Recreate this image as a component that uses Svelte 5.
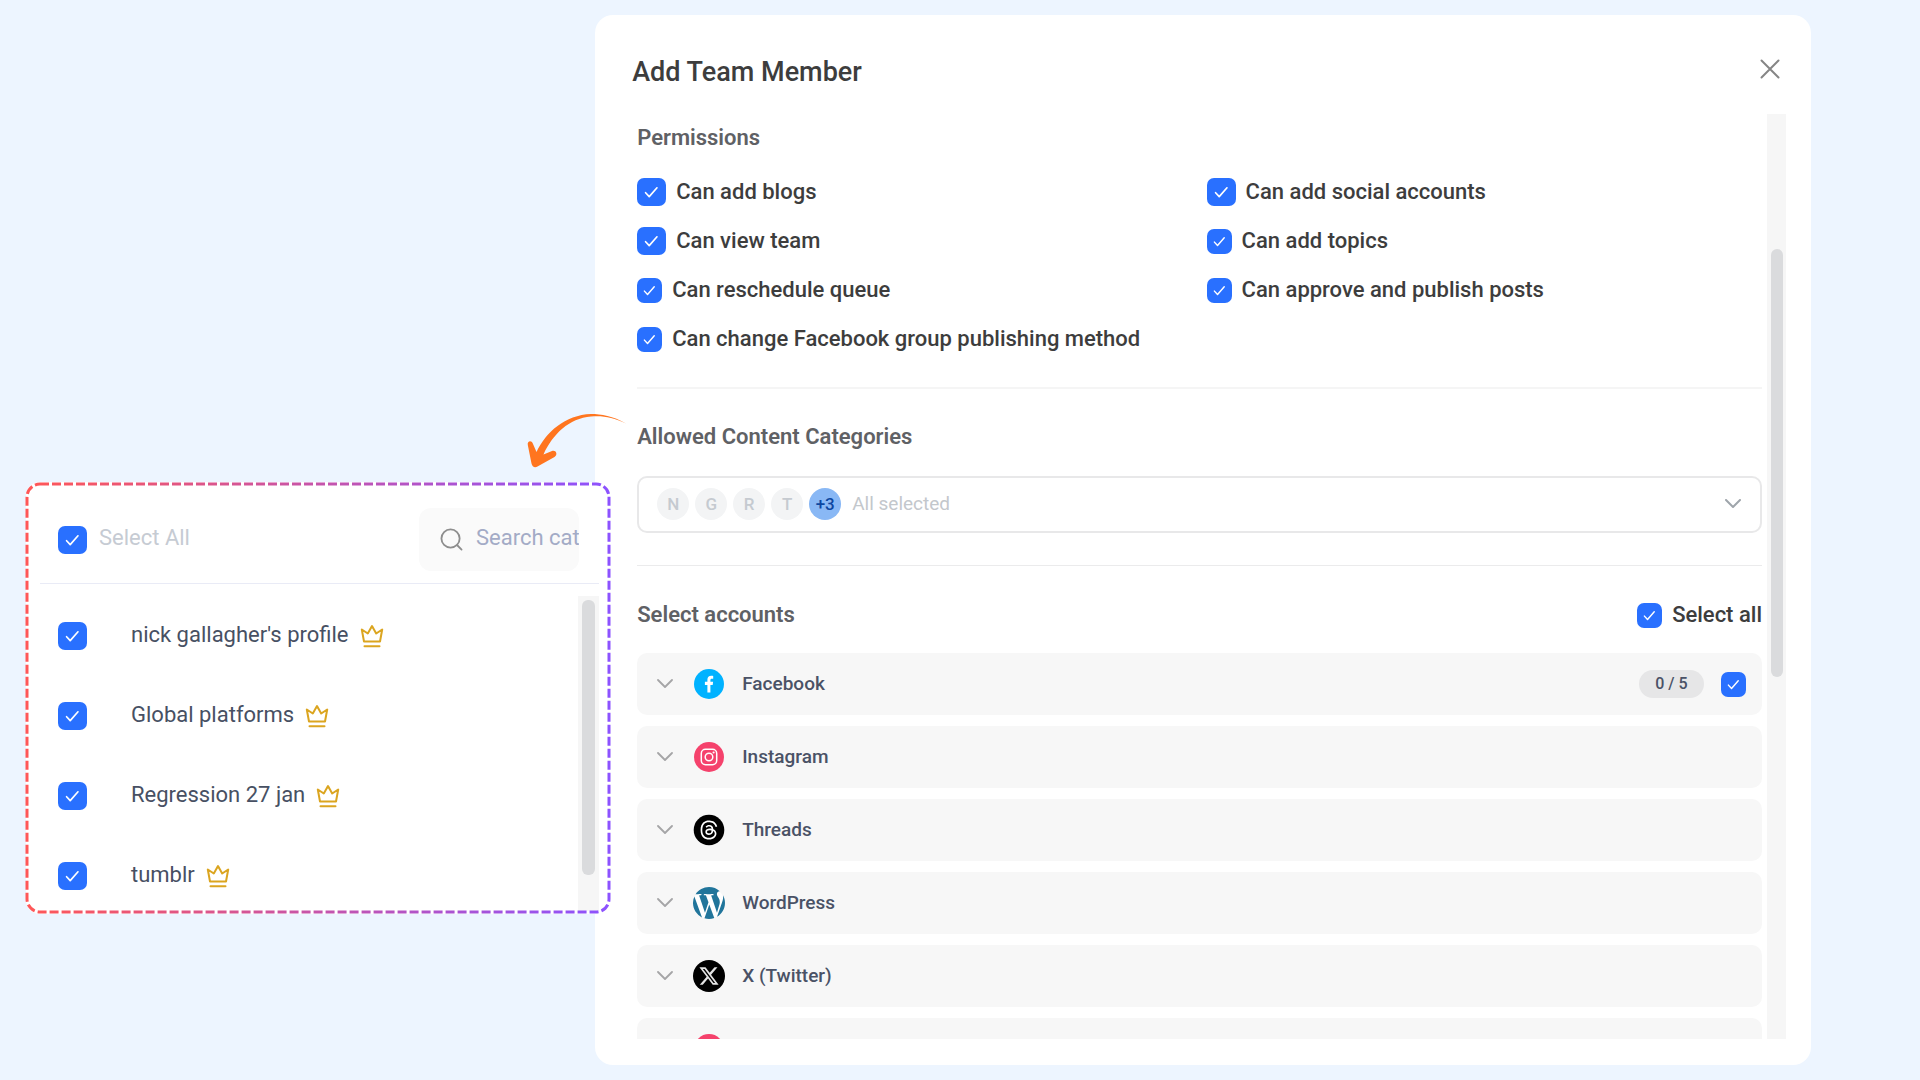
<script lang="ts">
  interface Permission {
    label: string;
    large?: boolean;
  }
  interface Account {
    id: string;
    name: string;
    icon: string;
    count?: string;
  }

  // row by row, two columns
  const permissions: Permission[] = [
    { label: 'Can add blogs', large: true },
    { label: 'Can add social accounts', large: true },
    { label: 'Can view team', large: true },
    { label: 'Can add topics' },
    { label: 'Can reschedule queue' },
    { label: 'Can approve and publish posts' },
    { label: 'Can change Facebook group publishing method' },
  ];

  const initials = ['N', 'G', 'R', 'T'];

  const accounts: Account[] = [
    { id: 'facebook', name: 'Facebook', icon: 'facebook', count: '0 / 5' },
    { id: 'instagram', name: 'Instagram', icon: 'instagram' },
    { id: 'threads', name: 'Threads', icon: 'threads' },
    { id: 'wordpress', name: 'WordPress', icon: 'wordpress' },
    { id: 'x', name: 'X (Twitter)', icon: 'x' },
    { id: 'next', name: '', icon: 'pink' },
  ];

  const categories = ["nick gallagher's profile", 'Global platforms', 'Regression 27 jan', 'tumblr'];

  const ICONS: Record<string, string> = {
    facebook:
      '<circle cx="16" cy="16" r="15" fill="#00b2ff"/><path fill="#fff" d="M14.4 24.6v-7.7h-2.5v-3.1h2.5v-2c0-2.6 1.5-4 3.8-4 .9 0 1.7.1 2 .2v2.8h-1.4c-1.1 0-1.4.6-1.4 1.5v1.5h2.7l-.4 3.1h-2.3v7.7z"/>',
    instagram:
      '<circle cx="16" cy="16" r="15" fill="#f5426c"/><g fill="none" stroke="#fff" stroke-width="1.5"><rect x="8.3" y="8.3" width="15.4" height="15.4" rx="4.2"/><circle cx="16" cy="16" r="3.8"/></g><circle cx="20.6" cy="11.5" r="1.1" fill="#fff"/>',
    threads:
      '<circle cx="16" cy="16" r="15.3" fill="#000"/><path fill="#fff" transform="translate(6.4 6.5) scale(1.19)" d="M6.321 6.016c-.27-.18-1.166-.802-1.166-.802.756-1.081 1.753-1.502 3.132-1.502.975 0 1.803.327 2.394.948s.928 1.509 1.005 2.644q.492.207.905.484c1.109.745 1.719 1.86 1.719 3.137 0 2.716-2.226 5.075-6.256 5.075C4.594 16 1 13.987 1 7.994 1 2.034 4.482 0 8.044 0 9.69 0 13.55.243 15 5.036l-1.36.353C12.516 1.974 10.163 1.43 8.006 1.43c-3.565 0-5.582 2.171-5.582 6.79 0 4.143 2.254 6.343 5.63 6.343 2.777 0 4.847-1.443 4.847-3.556 0-1.438-1.208-2.127-1.27-2.127-.236 1.234-.868 3.31-3.644 3.31-1.618 0-3.013-1.118-3.013-2.582 0-2.09 1.984-2.847 3.55-2.847.586 0 1.294.04 1.663.114 0-.637-.54-1.728-1.9-1.728-1.25 0-1.566.405-1.967.868ZM8.716 8.19c-2.04 0-2.304.87-2.304 1.416 0 .878 1.043 1.168 1.6 1.168 1.02 0 2.067-.282 2.232-2.423a6.2 6.2 0 0 0-1.528-.161"/>',
    wordpress:
      '<circle cx="16" cy="16" r="15.5" fill="#fff"/><path fill="#21759b" transform="translate(-1.8 -1.8) scale(1.483)" d="M21.469 6.825c.84 1.537 1.318 3.3 1.318 5.175 0 3.979-2.156 7.456-5.363 9.325l3.295-9.527c.615-1.54.82-2.771.82-3.864 0-.405-.026-.78-.07-1.11m-7.981.105c.647-.03 1.232-.105 1.232-.105.582-.075.514-.93-.067-.899 0 0-1.755.135-2.88.135-1.064 0-2.85-.15-2.85-.15-.585-.03-.661.855-.075.885 0 0 .54.061 1.125.09l1.68 4.605-2.37 7.08L5.354 6.9c.649-.03 1.234-.1 1.234-.1.585-.075.516-.93-.065-.896 0 0-1.746.138-2.874.138-.2 0-.438-.008-.69-.015C4.911 3.15 8.235 1.215 12 1.215c2.809 0 5.365 1.072 7.286 2.833-.046-.003-.091-.009-.141-.009-1.06 0-1.812.923-1.812 1.914 0 .89.513 1.643 1.06 2.531.411.72.89 1.643.89 2.977 0 .915-.354 1.994-.821 3.479l-1.075 3.585-3.9-11.61zM12 22.784c-1.059 0-2.081-.153-3.048-.437l3.237-9.406 3.315 9.087c.024.053.05.101.078.149-1.12.393-2.325.609-3.582.609M1.211 12c0-1.564.336-3.05.935-4.39L7.29 21.709C3.694 19.96 1.212 16.271 1.211 12"/>',
    x: '<circle cx="16" cy="16" r="16" fill="#000"/><path fill="#e4e4e4" transform="translate(5.3 5.3) scale(.89)" d="M18.244 2.25h3.308l-7.227 8.26 8.502 11.24H16.17l-5.214-6.817L4.99 21.75H1.68l7.73-8.835L1.254 2.25H8.08l4.713 6.231zm-1.161 17.52h1.833L7.084 4.126H5.117z"/>',
    pink: '<circle cx="16" cy="16" r="15" fill="#f5426c"/>',
  };
</script>

{#snippet chevron()}
  <svg class="chevron" viewBox="0 0 16 10" fill="none" stroke="currentColor" stroke-linecap="round" stroke-linejoin="round">
    <path d="M1 1l7 7 7-7" />
  </svg>
{/snippet}

<div class="page">
  <main class="modal">
    <header class="modal-head">
      <h1>Add Team Member</h1>
      <button class="close" type="button" aria-label="Close">
        <svg viewBox="0 0 32 32" fill="none" stroke="currentColor" stroke-width="2" stroke-linecap="round">
          <path d="M7.500 7.500l17 17M24.500 7.500l-17 17" />
        </svg>
      </button>
    </header>

    <div class="modal-body">
      <div class="content">
        <h2>Permissions</h2>
        <div class="permissions">
          {#each permissions as p (p.label)}
            <label class="check-label">
              <input type="checkbox" class="check" class:large={p.large} checked />
              <span>{p.label}</span>
            </label>
          {/each}
        </div>

        <hr class="thick" />

        <h2>Allowed Content Categories</h2>
        <button class="category-select" type="button" aria-haspopup="listbox" aria-label="Allowed Content Categories">
          <span class="avatars">
            {#each initials as letter (letter)}
              <span class="avatar">{letter}</span>
            {/each}
            <span class="avatar more">+3</span>
          </span>
          <span class="summary">All selected</span>
          {@render chevron()}
        </button>

        <hr />

        <div class="accounts-head">
          <h2>Select accounts</h2>
          <label class="check-label">
            <input type="checkbox" class="check" checked />
            <span>Select all</span>
          </label>
        </div>
        <div class="accounts">
          {#each accounts as a (a.id)}
            <div class="account">
              <button class="expand" type="button" aria-label={a.name}>{@render chevron()}</button>
              <svg class="logo" viewBox="0 0 32 32">{@html ICONS[a.icon]}</svg>
              <span class="account-name">{a.name}</span>
              {#if a.count}
                <span class="count">{a.count}</span>
                <input type="checkbox" class="check" aria-label={a.name} checked />
              {/if}
            </div>
          {/each}
        </div>
      </div>
      <div class="track"><div class="thumb"></div></div>
    </div>
  </main>

  <svg class="arrow" viewBox="0 0 120 72" fill="#ff751f">
    <path
      d="M111 18.500C98 11 86 9 76 9C50 10 31 27 21.500 47L17.800 38.500C16.500 35 12 36 12.800 40L16.500 58.500C17.200 62 20 63 22.500 61.500L39.500 52C43.500 49 40.500 44.500 37 46L28.500 49.500C38 29 54 13.500 76 11.600C88 10.500 98 12.500 111 18.500z"
    />
  </svg>

  <aside class="callout">
    <svg class="outline" aria-hidden="true">
      <defs>
        <linearGradient id="edge">
          <stop offset="0" stop-color="#ff5757" />
          <stop offset="1" stop-color="#8c52ff" />
        </linearGradient>
      </defs>
      <rect width="100%" height="100%" rx="13" fill="none" stroke="url(#edge)" stroke-width="3" stroke-dasharray="9 3" />
    </svg>
    <div class="callout-head">
      <label class="select-all">
        <input type="checkbox" class="check large" checked />
        <span>Select All</span>
      </label>
      <label class="search">
        <svg viewBox="0 0 24 24" fill="none" stroke="currentColor" stroke-width="1.9" stroke-linecap="round">
          <circle cx="11" cy="11" r="9.500" />
          <path d="M18 18l4.500 4.500" />
        </svg>
        <input type="text" placeholder="Search cat" aria-label="Search" />
      </label>
    </div>
    <div class="callout-body">
      <div class="categories">
        {#each categories as c (c)}
          <label class="category">
            <input type="checkbox" class="check large" checked />
            <span class="category-name">{c}</span>
            <svg class="crown" viewBox="0 0 24 24" fill="none" stroke="currentColor" stroke-width="2" stroke-linejoin="round" stroke-linecap="round">
              <path d="M4 17.500L1.800 5.500L7.800 9.500L12 2L16.200 9.500L22.200 5.500L20 17.500z" />
              <path d="M4.500 22.300h15" />
            </svg>
          </label>
        {/each}
      </div>
      <div class="track wide"><div class="thumb"></div></div>
    </div>
  </aside>
</div>

<style>
  :global(body) {
    overflow: hidden;
    background: #edf5ff;
  }
  .page {
    position: relative;
    box-sizing: border-box;
    height: 100vh;
    padding: 15px 109px 15px 31%;
    font-family: Roboto, 'Liberation Sans', sans-serif;
    font-size: 22px;
    line-height: 28px;
    color: #3d3d3d;
  }
  button {
    padding: 0;
    border: 0;
    background: none;
    font: inherit;
    color: inherit;
    cursor: pointer;
  }
  h1,
  h2 {
    margin: 0;
    font-weight: 500;
  }
  h2 {
    font-size: 22px;
    font-weight: 600;
    line-height: 28px;
    color: #5f6165;
  }
  hr {
    margin: 32px 0 35px;
    border: 0;
    border-top: 1px solid #ebebec;
  }
  hr.thick {
    margin: 34px 0;
    border-top: 2px solid #f5f5f5;
  }

  .modal {
    box-sizing: border-box;
    height: 100%;
    display: flex;
    flex-direction: column;
    padding: 38px 25px 26px 42px;
    border-radius: 18px;
    background: #fff;
  }
  .modal-head {
    display: flex;
    justify-content: space-between;
    align-items: flex-start;
    margin-left: -5px;
    padding-bottom: 23px;
  }
  .modal-head h1 {
    font-size: 27px;
    line-height: 38px;
  }
  .close {
    width: 32px;
    height: 32px;
    color: #858585;
  }
  .close svg {
    display: block;
  }
  .modal-body {
    flex: 1;
    min-height: 0;
    display: flex;
    gap: 5px;
    overflow: hidden;
  }
  .content {
    flex: 1;
    min-width: 0;
    padding-top: 10px;
  }

  .permissions {
    display: grid;
    grid-template-columns: 1fr 1fr;
    gap: 21px 14px;
    margin-top: 26px;
  }
  .check-label {
    display: flex;
    align-items: center;
    gap: 10px;
    font-weight: 500;
  }
  .check-label span {
    white-space: nowrap;
  }
  .check {
    appearance: none;
    flex-shrink: 0;
    width: 25px;
    height: 25px;
    margin: 0;
    border-radius: 7px;
    background: #2970ff
      url("data:image/svg+xml,%3Csvg xmlns='http://www.w3.org/2000/svg' viewBox='0 0 28 28' fill='none' stroke='white' stroke-width='1.6' stroke-linecap='round' stroke-linejoin='round'%3E%3Cpath d='M8.300 14.700l3.500 3.800L19.300 9.900'/%3E%3C/svg%3E")
      center / 100% no-repeat;
  }
  .check.large {
    width: 29px;
    height: 28px;
  }

  .category-select {
    box-sizing: border-box;
    display: flex;
    align-items: center;
    gap: 11px;
    width: 100%;
    height: 57px;
    margin-top: 25px;
    padding: 0 19px 2px 18px;
    border: 2px solid #e8e8e9;
    border-radius: 10px;
  }
  .avatars {
    display: flex;
    gap: 6px;
  }
  .avatar {
    width: 32px;
    height: 32px;
    border-radius: 50%;
    background: #f3f4f5;
    color: #c5cad0;
    font-size: 17px;
    font-weight: 500;
    line-height: 32px;
    text-align: center;
  }
  .avatar.more {
    background: #89b8f5;
    color: #0d47a1;
  }
  .summary {
    flex: 1;
    font-size: 19px;
    text-align: left;
    color: #c3c7cc;
  }
  .chevron {
    display: block;
    width: 16px;
    height: 10px;
    stroke-width: 2;
    color: #9fa5ab;
  }

  .accounts-head {
    display: flex;
    justify-content: space-between;
    align-items: center;
  }
  .accounts {
    display: grid;
    gap: 11px;
    margin-top: 24px;
  }
  .account {
    display: flex;
    align-items: center;
    height: 62px;
    padding: 0 16px 0 20px;
    border-radius: 10px;
    background: #f7f7f7;
  }
  .expand .chevron {
    stroke-width: 1.8;
    color: #a5a5a7;
  }
  .logo {
    width: 32px;
    height: 32px;
    margin: 0 17px 0 20px;
  }
  .account-name {
    flex: 1;
    font-size: 19px;
    font-weight: 500;
    color: #4a5266;
  }
  .count {
    width: 65px;
    margin-right: 17px;
    border-radius: 14px;
    background: #e6e6e7;
    color: #4a5266;
    font-size: 16px;
    font-weight: 500;
    text-align: center;
  }

  .track {
    width: 19px;
    background: #f6f6f6;
  }
  .thumb {
    width: 12px;
    height: 428px;
    margin: 135px auto 0;
    border-radius: 6px;
    background: #dadbdd;
  }

  .arrow {
    position: absolute;
    left: 515px;
    top: 405px;
    width: 120px;
    height: 72px;
  }

  .callout {
    position: absolute;
    left: 26px;
    top: 482px;
    box-sizing: border-box;
    display: flex;
    flex-direction: column;
    width: 585px;
    height: 432px;
    border-radius: 14px;
    background: #fff;
  }
  .outline {
    position: absolute;
    left: 1px;
    top: 2px;
    width: calc(100% - 3px);
    height: calc(100% - 4px);
    overflow: visible;
    pointer-events: none;
  }
  .callout-head {
    display: flex;
    justify-content: space-between;
    align-items: center;
    margin: 0 12px 0 14px;
    padding: 26px 20px 12px 18px;
    border-bottom: 1px solid #e9ebf6;
  }
  .select-all {
    display: flex;
    align-items: center;
    gap: 12px;
    color: #c6cbd3;
  }
  .select-all span,
  .category-name {
    padding-bottom: 3px;
  }
  .search {
    box-sizing: border-box;
    display: flex;
    align-items: center;
    gap: 13px;
    width: 160px;
    height: 63px;
    padding-left: 21px;
    border-radius: 12px;
    background: #fafafa;
    color: #8e8e8e;
  }
  .search svg {
    flex-shrink: 0;
    width: 23px;
    height: 23px;
  }
  .search input {
    flex: 1;
    min-width: 0;
    padding: 0 0 3px;
    border: 0;
    outline: 0;
    background: none;
    font: inherit;
  }
  .search input::placeholder {
    color: #a3abc6;
  }
  .callout-body {
    flex: 1;
    min-height: 0;
    display: flex;
    margin: 12px 12px 3px 32px;
    overflow: hidden;
  }
  .categories {
    flex: 1;
  }
  .category {
    display: flex;
    align-items: center;
    height: 80px;
    color: #475063;
  }
  .category-name {
    margin: 0 11px 0 44px;
  }
  .crown {
    width: 24px;
    height: 24px;
    color: #dba520;
  }
  .track.wide {
    width: 21px;
  }
  .track.wide .thumb {
    width: 13px;
    height: 275px;
    margin-top: 4px;
  }
</style>
